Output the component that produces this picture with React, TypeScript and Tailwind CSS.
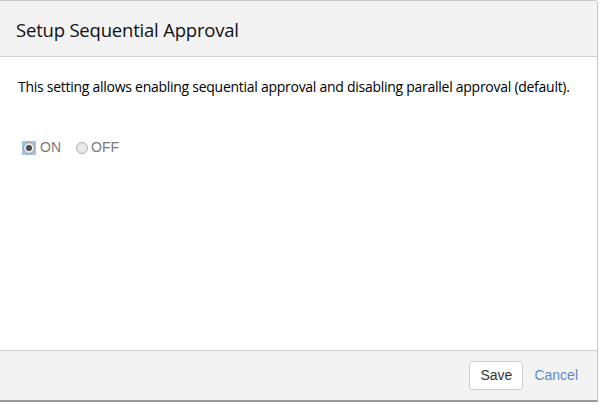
import React from 'react';

export default function App() {
    const [on, setOn] = React.useState(true);

    return (
        <div className="w-[601px] h-[403px] bg-white overflow-hidden">
            <div className="w-[598px] h-[402px] flex flex-col bg-white border-t border-r border-[#c8c8c8] border-b-2 border-b-[#9a9a9a] rounded-tr-[4px] overflow-hidden">
                {/* Header */}
                <div className="h-[56px] shrink-0 bg-[#f3f3f3] border-b border-[#cfcfcf] flex items-center pl-4 pt-[3px]">
                    <h3 className="text-[18.5px] text-[#111] tracking-[-0.2px]" style={{ fontFamily: '"Open Sans", sans-serif' }}>
                        Setup Sequential Approval
                    </h3>
                </div>

                {/* Body */}
                <div className="flex-1 px-[18px] pt-[19px]">
                    <p className="text-[14px] text-black tracking-[-0.27px]" style={{ fontFamily: '"Open Sans", sans-serif' }}>
                        This setting allows enabling sequential approval and disabling parallel approval (default).
                    </p>
                    <div className="flex items-center mt-[40px] pl-[4px] text-[14px] text-[#7a7a7a]" style={{ fontFamily: '"Liberation Sans", Arial, sans-serif' }}>
                        <label className="flex items-center cursor-pointer" onClick={() => setOn(true)}>
                            <span className={`w-[14px] h-[14px] flex items-center justify-center ${on ? 'bg-[#9ec2ee]' : ''}`}>
                                <span className="w-[12px] h-[12px] rounded-full border border-[#a0a0a0] bg-[#e8e8e8] flex items-center justify-center">
                                    {on && <span className="w-[6px] h-[6px] rounded-full bg-[#4d4d4d]" />}
                                </span>
                            </span>
                            <span className="ml-[4px]">ON</span>
                        </label>
                        <label className="flex items-center ml-[14px] cursor-pointer" onClick={() => setOn(false)}>
                            <span className={`w-[14px] h-[14px] flex items-center justify-center ${!on ? 'bg-[#9ec2ee]' : ''}`}>
                                <span className="w-[12px] h-[12px] rounded-full border border-[#b0b0b0] bg-[#e8e8e8] flex items-center justify-center">
                                    {!on && <span className="w-[6px] h-[6px] rounded-full bg-[#4d4d4d]" />}
                                </span>
                            </span>
                            <span className="ml-[2px]">OFF</span>
                        </label>
                    </div>
                </div>

                {/* Footer */}
                <div className="h-[50px] shrink-0 bg-[#f3f3f3] border-t border-[#cfcfcf] flex items-center justify-end pr-[19px] gap-[11px]" style={{ fontFamily: '"Liberation Sans", Arial, sans-serif' }}>
                    <button className="h-[29px] px-[10px] bg-white border border-[#cccccc] rounded-[3px] text-[14px] text-[#333]">
                        Save
                    </button>
                    <a className="text-[14px] text-[#5a8ac6] cursor-pointer">Cancel</a>
                </div>
            </div>
        </div>
    );
}
